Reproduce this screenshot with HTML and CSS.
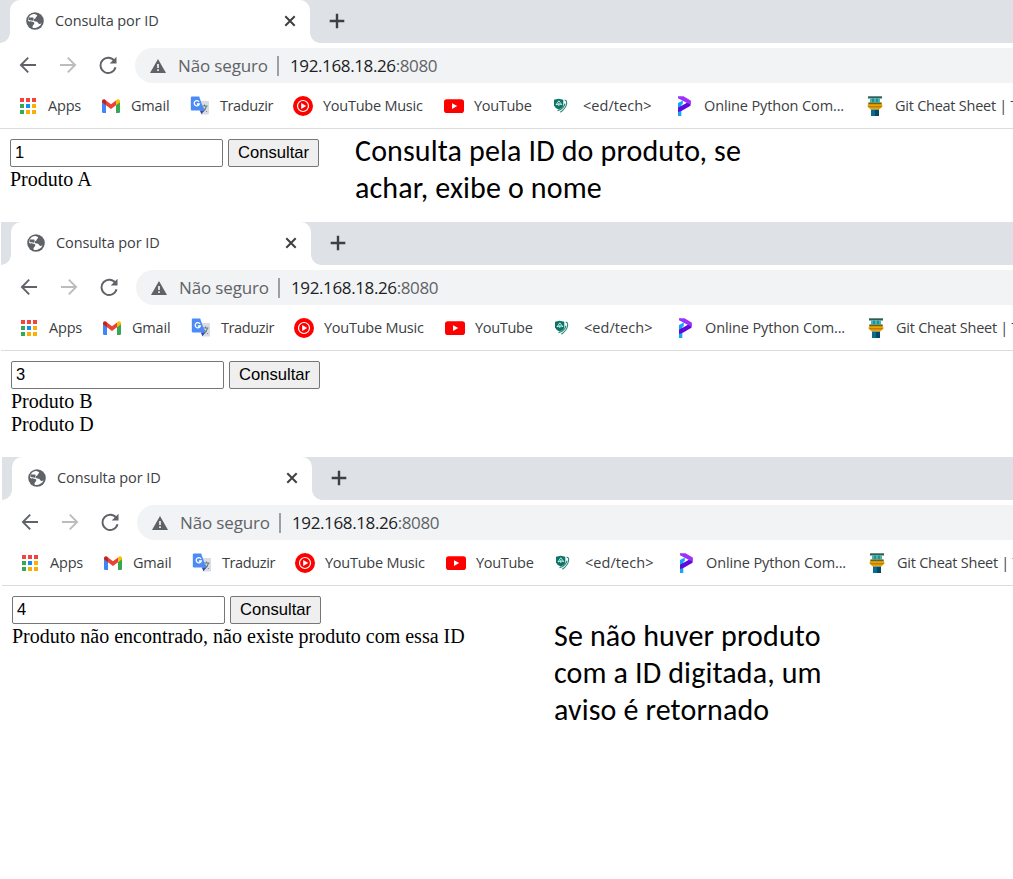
FILE: index.html
```html
<!DOCTYPE html>
<html lang="pt-BR">
<head>
<meta charset="utf-8">
<title>Consulta por ID</title>
<link rel="stylesheet" href="styles.css">
</head>
<body>
<svg class="symbols" aria-hidden="true">
  <symbol id="globe" viewBox="0 0 18 18"><circle cx="9" cy="9" r="8.8" fill="#5f6368"/><path d="M8.400 2C5.800 2 3.500 3.600 2.500 6L2 8.700C4 10.100 6.200 9.200 7.500 9.900 9 10.700 8 11.900 7.500 12.800 6.700 14 6 14.800 6.800 15.700 9.500 16.500 13.800 15.200 15.500 11.500 14.500 11.500 13.200 12.700 12.300 11.300 11.600 10.100 11.200 9.300 9.500 9.500 7.800 9.500 7.200 8.300 7.800 7.300 8.400 6.500 9.600 6.700 9.800 5.700 9.800 4.900 10.600 4.700 11.100 4.100 11.500 3.300 10.500 2.400 8.400 2Z" fill="#fff"/><path d="M3 5.200C5 6 6.500 4.900 7.700 6L7.100 8.700 2.500 8.100Z" fill="#5f6368"/></symbol>
  <symbol id="close" viewBox="0 0 12 12"><path d="M1.300 1.300 10.700 10.700M10.700 1.300 1.300 10.700" fill="none" stroke="#3c4043" stroke-width="2"/></symbol>
  <symbol id="plus" viewBox="0 0 16 16"><path d="M8 .7V15.300M.7 8H15.300" fill="none" stroke="#3c4043" stroke-width="2.400"/></symbol>
  <symbol id="arrow" viewBox="0 0 18 18"><path d="M17 9H2M9.200 1.700 1.900 9 9.200 16.300" fill="none" stroke="currentColor" stroke-width="1.900"/></symbol>
  <symbol id="reload" viewBox="0 0 18 18"><path d="M15.700 5.500A7.600 7.600 0 1 0 16.500 11.300" fill="none" stroke="#5f6368" stroke-width="1.900"/><path d="M17.500.7V7.500H10.700Z" fill="#5f6368"/></symbol>
  <symbol id="warning" viewBox="0 0 16 14"><path d="M8 0 16 14H0Z" fill="#5f6368"/><path d="M8 5V9M8 10.300V12" stroke="#f1f3f4" stroke-width="1.700"/></symbol>
  <symbol id="apps" viewBox="0 0 20 20"><path d="M2 2h4v4H2zM8 2h4v4H8zM14 2h4v4h-4z" fill="#f4433c"/><path d="M2 8h4v4H2zM2 14h4v4H2z" fill="#34a853"/><path d="M8 8h4v4H8z" fill="#168bf2"/><path d="M14 8h4v4h-4zM14 14h4v4h-4zM8 14h4v4H8z" fill="#fbad08"/></symbol>
  <symbol id="gmail" viewBox="0 0 20 20"><path d="M1 5.500 5 8.500V17H2.200Q1 17 1 15.800Z" fill="#4285f4"/><path d="M15 8.500 19 5.500V15.800Q19 17 17.800 17H15Z" fill="#34a853"/><path d="M5 4.500 10 8.300 15 4.500V9.200L10 13 5 9.200Z" fill="#ea4335"/><path d="M1 5.500C1 3 3.500 2.500 5 4.500V9.200L1 6.200Z" fill="#c5221f"/><path d="M15 4.500C16.500 2.500 19 3 19 5.500V6.200L15 9.200Z" fill="#fbbc04"/></symbol>
  <symbol id="translate" viewBox="0 0 20 20"><path d="M9 5h9q1 0 1 1v11.500q0 1-1 1h-6Z" fill="#dadce0"/><path d="M11.500 10h6M14.500 8.500V10M16.500 10Q15.500 14 12.500 16M12.700 11.500Q14.500 14.500 17 15.500" stroke="#607d8b" stroke-width="1.100" fill="none"/><path d="M2 .5h7.200L14 14.500H2q-1.200 0-1.200-1.200V1.700Q.8.500 2 .5Z" fill="#4c8bf5"/><path d="M9.800 14.500H14L11.500 18.500Z" fill="#3049b8"/><path d="M9 5.800A2.600 2.600 0 1 0 9.300 8H6.900" fill="none" stroke="#fff" stroke-width="1.300"/></symbol>
  <symbol id="music" viewBox="0 0 20 20"><circle cx="10" cy="10" r="10" fill="red"/><circle cx="10" cy="10" r="5.500" fill="none" stroke="#fff" stroke-width="1.200"/><path d="M8.200 6.900 13.200 10 8.200 13.100Z" fill="#fff"/></symbol>
  <symbol id="youtube" viewBox="0 0 20 20"><rect y="3.200" width="20" height="13.800" rx="2.800" fill="red"/><path d="M8 7.200 13.200 10.100 8 13Z" fill="#fff"/></symbol>
  <symbol id="edtech" viewBox="0 0 20 20"><path d="M1 3.700 5.700 2.800 10.300 3.700V10Q9.500 12 5.700 13.600Q1.800 12 1 9.500Z" fill="#087568"/><path d="M3 8.800 5.800 4.800 8.800 8.600Q5.800 7.200 3 8.800ZM5.800 7.200V10" stroke="#fff" stroke-width=".8" fill="none"/><path d="M11.700 4.400Q14 4 13.600 7.500 13 12.500 7.300 16.200M11.900 7.600Q11.300 12.300 4.500 14.800" stroke="#2c8478" stroke-width="1.100" fill="none"/></symbol>
  <symbol id="python" viewBox="0 0 20 20"><path d="M4 7 8.800 4.500V8L7.300 9V20H4Z" fill="#14a5f5"/><path d="M4 11.700 16.500 4.800V9.800L7.400 15.100 4 16Z" fill="#6009df"/><path d="M4 .2H9.500L16.700 4.500V8.500L13 7 4 2.300Z" fill="#9c31fb"/></symbol>
  <symbol id="git" viewBox="0 0 20 20"><path d="M3 .3H17V2.500H3Z" fill="#305d51"/><path d="M5 2.500H15V6.500H5Z" fill="#38b8c1"/><path d="M8 2.500V6.500M12 2.500V6.500" stroke="#17636f"/><path d="M3.500 6.500H16.500L17.500 10 14.500 13.500H5.500L2.500 10Z" fill="#eea500"/><path d="M3.500 6.500H16.500V8.200H3.500Z" fill="#556932"/><path d="M2.500 10H17.500L16.300 11.600H3.700Z" fill="#c17d0c"/><path d="M6 13.500H14V20H6Z" fill="#086b91"/><path d="M10 14V20H14V14Z" fill="#064761"/></symbol>
</svg>
<main class="board">

<section class="browser browser-first">
  <header class="tab-strip">
    <div class="tab"><svg class="favicon"><use href="#globe"/></svg><span class="tab-title">Consulta por ID</span><svg class="tab-close"><use href="#close"/></svg></div>
    <svg class="new-tab"><use href="#plus"/></svg>
  </header>
  <div class="toolbar">
    <svg class="nav-icon"><use href="#arrow"/></svg><svg class="nav-icon forward"><use href="#arrow"/></svg><svg class="nav-icon"><use href="#reload"/></svg>
    <div class="address"><svg class="warning"><use href="#warning"/></svg><span class="security">Não seguro</span><i class="separator"></i><span class="host">192.168.18.26</span><span class="port">:8080</span></div>
  </div>
  <nav class="bookmarks">
    <div class="bookmark apps"><svg><use href="#apps"/></svg><span>Apps</span></div>
    <div class="bookmark gmail"><svg><use href="#gmail"/></svg><span>Gmail</span></div>
    <div class="bookmark translate"><svg><use href="#translate"/></svg><span>Traduzir</span></div>
    <div class="bookmark music"><svg><use href="#music"/></svg><span>YouTube Music</span></div>
    <div class="bookmark youtube"><svg><use href="#youtube"/></svg><span>YouTube</span></div>
    <div class="bookmark edtech"><svg><use href="#edtech"/></svg><span>&lt;ed/tech&gt;</span></div>
    <div class="bookmark python"><svg><use href="#python"/></svg><span>Online Python Com...</span></div>
    <div class="bookmark git"><svg><use href="#git"/></svg><span>Git Cheat Sheet | T</span></div>
  </nav>
  <div class="page">
    <div class="content"><form class="query"><input class="field" value="1"><button class="submit" type="button">Consultar</button></form><p class="result">Produto A</p></div>
    <p class="note note-name">Consulta pela ID do produto, se<br>achar, exibe o nome</p>
  </div>
</section>

<section class="browser browser-second">
  <header class="tab-strip">
    <div class="tab"><svg class="favicon"><use href="#globe"/></svg><span class="tab-title">Consulta por ID</span><svg class="tab-close"><use href="#close"/></svg></div>
    <svg class="new-tab"><use href="#plus"/></svg>
  </header>
  <div class="toolbar">
    <svg class="nav-icon"><use href="#arrow"/></svg><svg class="nav-icon forward"><use href="#arrow"/></svg><svg class="nav-icon"><use href="#reload"/></svg>
    <div class="address"><svg class="warning"><use href="#warning"/></svg><span class="security">Não seguro</span><i class="separator"></i><span class="host">192.168.18.26</span><span class="port">:8080</span></div>
  </div>
  <nav class="bookmarks">
    <div class="bookmark apps"><svg><use href="#apps"/></svg><span>Apps</span></div>
    <div class="bookmark gmail"><svg><use href="#gmail"/></svg><span>Gmail</span></div>
    <div class="bookmark translate"><svg><use href="#translate"/></svg><span>Traduzir</span></div>
    <div class="bookmark music"><svg><use href="#music"/></svg><span>YouTube Music</span></div>
    <div class="bookmark youtube"><svg><use href="#youtube"/></svg><span>YouTube</span></div>
    <div class="bookmark edtech"><svg><use href="#edtech"/></svg><span>&lt;ed/tech&gt;</span></div>
    <div class="bookmark python"><svg><use href="#python"/></svg><span>Online Python Com...</span></div>
    <div class="bookmark git"><svg><use href="#git"/></svg><span>Git Cheat Sheet | T</span></div>
  </nav>
  <div class="page">
    <div class="content"><form class="query"><input class="field" value="3"><button class="submit" type="button">Consultar</button></form><p class="result">Produto B<br>Produto D</p></div>
  </div>
</section>

<section class="browser browser-third">
  <header class="tab-strip">
    <div class="tab"><svg class="favicon"><use href="#globe"/></svg><span class="tab-title">Consulta por ID</span><svg class="tab-close"><use href="#close"/></svg></div>
    <svg class="new-tab"><use href="#plus"/></svg>
  </header>
  <div class="toolbar">
    <svg class="nav-icon"><use href="#arrow"/></svg><svg class="nav-icon forward"><use href="#arrow"/></svg><svg class="nav-icon"><use href="#reload"/></svg>
    <div class="address"><svg class="warning"><use href="#warning"/></svg><span class="security">Não seguro</span><i class="separator"></i><span class="host">192.168.18.26</span><span class="port">:8080</span></div>
  </div>
  <nav class="bookmarks">
    <div class="bookmark apps"><svg><use href="#apps"/></svg><span>Apps</span></div>
    <div class="bookmark gmail"><svg><use href="#gmail"/></svg><span>Gmail</span></div>
    <div class="bookmark translate"><svg><use href="#translate"/></svg><span>Traduzir</span></div>
    <div class="bookmark music"><svg><use href="#music"/></svg><span>YouTube Music</span></div>
    <div class="bookmark youtube"><svg><use href="#youtube"/></svg><span>YouTube</span></div>
    <div class="bookmark edtech"><svg><use href="#edtech"/></svg><span>&lt;ed/tech&gt;</span></div>
    <div class="bookmark python"><svg><use href="#python"/></svg><span>Online Python Com...</span></div>
    <div class="bookmark git"><svg><use href="#git"/></svg><span>Git Cheat Sheet | T</span></div>
  </nav>
  <div class="page">
    <div class="content"><form class="query"><input class="field" value="4"><button class="submit" type="button">Consultar</button></form><p class="result">Produto não encontrado, não existe produto com essa ID</p></div>
    <p class="note note-missing">Se não huver produto<br>com a ID digitada, um<br>aviso é retornado</p>
  </div>
</section>
</main>
</body>
</html>
```
FILE: styles.css
```css
* { box-sizing: border-box; }
body { margin: 0; background: #fff; overflow: hidden; }
p { margin: 0; }
.symbols { display: none; }
.board { width: 1013px; height: 879px; overflow: hidden; }
.browser { overflow: hidden; font-family: "Open Sans", sans-serif; }
.browser-first { height: 222px; }
.browser-second { height: 235px; margin-left: 1px; }
.browser-third { height: 422px; margin-left: 2px; }
.tab-strip { display: flex; height: 43px; background: #dee1e6; padding-left: 10px; }
.tab { position: relative; display: flex; align-items: center; width: 300px; height: 43px; padding: 0 14px 1px 16px; background: #fff; border-radius: 10px 10px 0 0; }
.tab::before, .tab::after { content: ""; position: absolute; bottom: 0; width: 10px; height: 10px; }
.tab::before { left: -10px; background: radial-gradient(circle at 0 0, transparent 9.5px, #fff 10px); }
.tab::after { right: -10px; background: radial-gradient(circle at 100% 0, transparent 9.5px, #fff 10px); }
.favicon { width: 18px; height: 18px; margin-right: 11px; }
.tab-title { flex: 1; padding-bottom: 2px; font-size: 14.5px; letter-spacing: -.1px; color: #3c4043; white-space: nowrap; }
.tab-close { width: 12px; height: 12px; }
.new-tab { width: 16px; height: 16px; margin: 13px 0 0 19px; }
.toolbar { display: flex; align-items: center; height: 45px; padding-left: 18.5px; }
.nav-icon { width: 18px; height: 18px; margin: 0 22px 1px 0; color: #5f6368; flex: none; }
.forward { transform: scaleX(-1); color: #babcbe; }
.address { display: flex; align-items: center; flex: 1; height: 35px; margin-left: -3.5px; padding-left: 15px; border-radius: 18px 0 0 18px; background: #f1f3f4; font-size: 17px; white-space: nowrap; }
.warning { width: 16px; height: 14px; margin-right: 12px; flex: none; }
.security { width: 99px; color: #5f6368; letter-spacing: -.15px; }
.separator { width: 2px; height: 20px; margin-right: 11px; background: #9aa0a6; }
.host { color: #202124; letter-spacing: -.38px; }
.port { color: #5f6368; letter-spacing: -.38px; }
.bookmarks { display: flex; align-items: center; height: 41px; padding: 0 0 5px 18px; border-bottom: 1px solid #dadce0; overflow: hidden; }
.bookmark { display: flex; align-items: center; flex: none; font-size: 14.5px; letter-spacing: -.2px; color: #3c4043; white-space: nowrap; }
.bookmark svg { width: 20px; height: 20px; margin-right: 10px; flex: none; }
.apps { width: 83px; }
.gmail { width: 89px; }
.translate { width: 103px; letter-spacing: -.4px; }
.music { width: 151px; letter-spacing: -.25px; }
.youtube { width: 109px; letter-spacing: -.3px; }
.edtech { width: 121px; letter-spacing: .05px; }
.python { width: 191px; letter-spacing: -.12px; }
.git { letter-spacing: -.25px; }
.page { display: flex; padding: 10px 0 0 10px; }
.content { flex: none; width: 345px; font: 20px/23px "Liberation Serif", serif; color: #000; white-space: nowrap; }
.result { padding-top: 1px; }
.query { display: flex; height: 28px; gap: 5px; }
.field { width: 213px; height: 28px; border: 1px solid #767676; border-radius: 2px; padding: 0 5px 2px 4px; font: 16.5px "Liberation Sans", sans-serif; color: #000; }
.submit { width: 91px; height: 28px; border: 1px solid #767676; border-radius: 2px; padding: 0 0 1px; background: #efefef; font: 16.6px "Liberation Sans", sans-serif; color: #000; }
.note { font: 30px/37px Carlito, "Open Sans", sans-serif; letter-spacing: .14px; color: #000; white-space: nowrap; }
.note-name { margin-top: -7px; }
.note-missing { margin: 21px 0 0 197px; }
```
